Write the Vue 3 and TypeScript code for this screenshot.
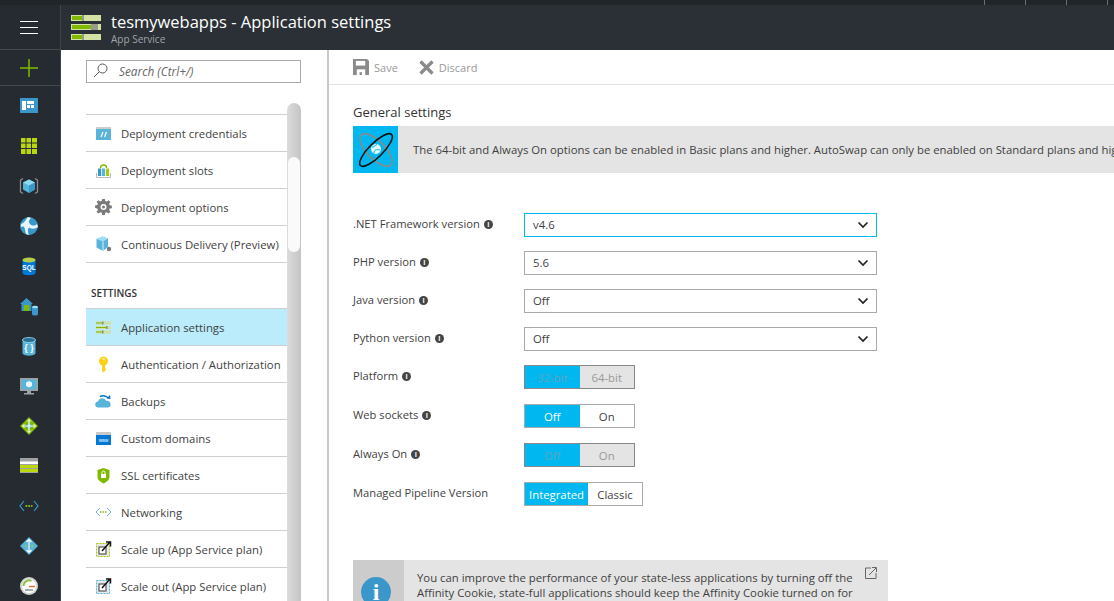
<script setup lang="ts">
const navIcons: string[] = [
  '<rect x="2" y="3" width="18" height="15" fill="#3b97c9"/><path d="M4 6h4v9H4zM9 6h7v3H9zM9 10h3v3H9zM13 10h3v3h-3z" fill="#fff"/>',
  '<rect x="3" y="3" width="16" height="16" fill="#bad80a"/><path d="M8 3v16M13.500 3v16M3 8h16M3 13.500h16" stroke="#252b30" stroke-width="1"/>',
  '<path d="M11 4.500l6 3v7l-6 3.500-6-3.500v-7z" fill="#59b4d9"/><path d="M11 4.500l6 3-6 3-6-3z" fill="#8fd8f2"/><path d="M11 10.500V18l6-3.500v-7z" fill="#3b97c9"/><path d="M5 3.500L2.500 5v12L5 18.500M17 3.500L19.500 5v12L17 18.500" fill="none" stroke="#8a8f93" stroke-width="1.300"/>',
  '<circle cx="11" cy="11" r="9" fill="#3b97c9"/><path d="M3 9c4-1 5-5 7-7l3 1c-2 2-3 4-1 6s5 2 7 0l1 3c-3 2-6 2-8 1s-3 3-1 7l-3-1c-1-3-1-6-2-7s-2 0-3 0z" fill="#e8f6fb"/>',
  '<path d="M4.500 5v13c0 3 13 3 13 0V5z" fill="#0078d7"/><ellipse cx="11" cy="5" rx="6.500" ry="2.500" fill="#b5cf4a"/><text x="11" y="15" font-size="6.500" font-weight="700" fill="#fff" text-anchor="middle" font-family="Liberation Sans">SQL</text>',
  '<path d="M2 9l6.500-6L15 9h-1.500v7h-10V9z" fill="#3b97c9"/><rect x="6" y="10" width="5" height="6" fill="#7fba00"/><path d="M14 12v7c0 2 6 2 6 0v-7z" fill="#3b97c9"/><ellipse cx="17" cy="12" rx="3" ry="1.300" fill="#a0e0f5"/>',
  '<path d="M4.500 5v13c0 3.500 13 3.500 13 0V5z" fill="#59b4d9"/><ellipse cx="11" cy="5" rx="6.500" ry="2.500" fill="#2a6f96" stroke="#a0e0f5" stroke-width=".8"/><text x="11" y="16" font-size="9" font-weight="700" fill="#fff" text-anchor="middle" font-family="Liberation Sans">{ }</text>',
  '<rect x="2" y="3" width="18" height="13" fill="#a0a1a2"/><rect x="3.500" y="4.500" width="15" height="10" fill="#59b4d9"/><path d="M11 6l3 1.500v3.500l-3 1.500-3-1.500V7.500z" fill="#e8f6fb"/><path d="M9 16h4v2h3v1.500H6V18h3z" fill="#a0a1a2"/>',
  '<path d="M11 2l9 9-9 9-9-9z" fill="#7fba00"/><circle cx="11" cy="11" r="2.500" fill="#59b4d9"/><path d="M11 4.500v13M4.500 11h13" stroke="#fff" stroke-width="1.200"/><path d="M9 6.500l2-2 2 2M9 15.500l2 2 2-2M6.500 9l-2 2 2 2M15.500 9l2 2-2 2" fill="none" stroke="#fff"/>',
  '<rect x="2" y="3" width="18" height="15" fill="#a0a1a2"/><rect x="2" y="6.500" width="18" height="2.500" fill="#fff"/><rect x="2" y="10" width="18" height="3" fill="#bad80a"/><rect x="2" y="14" width="18" height="3" fill="#bad80a"/>',
  '<path d="M6 6l-4 5 4 5M16 6l4 5-4 5" fill="none" stroke="#3b97c9" stroke-width="1.200"/><path d="M7.500 11h7" stroke="#7fba00" stroke-width="1.800" stroke-dasharray="1.800 1"/>',
  '<path d="M11 2l9 9-9 9-9-9z" fill="#59b4d9"/><path d="M11 4.500v13M8.500 7L11 4.500 13.500 7M8.500 15l2.500 2.500 2.500-2.500" fill="none" stroke="#fff" stroke-width="1.100"/><path d="M7 11h1.500M13.500 11H15" stroke="#bad80a" stroke-width="1.500"/>',
  '<circle cx="11" cy="11" r="9" fill="#d6d6d6"/><circle cx="11" cy="11" r="7" fill="#fff"/><path d="M5.500 11a5.500 5.500 0 0 1 8-5" fill="none" stroke="#8fbf3f" stroke-width="2"/><path d="M11 11.500h6" stroke="#e2703a" stroke-width="1.500"/><rect x="7" y="14" width="8" height="2" fill="#aaa"/>'
]

interface MenuItem { label: string; icon: string }

const deployItems: MenuItem[] = [
  { label: 'Deployment credentials', icon: '<path d="M1 3h15v13H1z" fill="#59b4d9"/><rect x="1" y="3" width="15" height="2" fill="#ccc"/><path d="M6 13l2-5M9.500 13l2-5" stroke="#fff" stroke-width="1.200"/>' },
  { label: 'Deployment slots', icon: '<path d="M5.500 7a3 3 0 0 1 6 0" fill="none" stroke="#7fba00" stroke-width="1.400"/><path d="M1.500 12v4.500h14V12" fill="none" stroke="#bbb"/><path d="M3 7.500h3.200V15H3z" fill="#3b97c9"/><path d="M7 7.500h3V15H7z" fill="#59b4d9"/><path d="M11 7.500h3V15h-3z" fill="#a5ce00"/>' },
  { label: 'Deployment options', icon: '<path d="M7.200 1.500h2.600l.4 2.200 1.500.6 1.900-1.300 1.800 1.800-1.300 1.900.6 1.500 2.200.4v2.600l-2.200.4-.6 1.500 1.300 1.900-1.800 1.800-1.900-1.300-1.500.6-.4 2.200H7.200l-.4-2.200-1.500-.6-1.900 1.300-1.800-1.800 1.300-1.900-.6-1.500L.1 11V8.400l2.200-.4.6-1.500L1.600 4.600l1.800-1.800 1.900 1.300 1.500-.6z" fill="#7a7a7a" transform="translate(0 -.500) scale(1 .95)"/><circle cx="8.500" cy="9" r="3" fill="#fff"/><circle cx="8.500" cy="9" r="1.500" fill="#7a7a7a"/>' },
  { label: 'Continuous Delivery (Preview)', icon: '<path d="M7.500 1.500l5.500 2V12l-5 4-6.500-3.500V4z" fill="#59b4d9"/><path d="M1.500 4l6.500 2.500L13 3.500l-5.500-2z" fill="#a0e0f5"/><path d="M8 6.500V16" stroke="#fff" stroke-width=".8"/><circle cx="14" cy="14" r="2.200" fill="#7a7a7a"/>' }
]

const settingItems: MenuItem[] = [
  { label: 'Authentication / Authorization', icon: '<circle cx="8.500" cy="6" r="4.500" fill="#fcd116"/><path d="M7 9h3v4.500h1.200v1.500H10v1l-1.500 1.500L7 16z" fill="#fcd116"/><rect x="7.300" y="3.200" width="2.400" height="1.500" fill="#fff" opacity=".8"/>' },
  { label: 'Backups', icon: '<path d="M3.500 15.500a3 3 0 0 1-.5-6 4.500 4.500 0 0 1 8.500-.5 3.300 3.300 0 0 1 1.500 6.500z" fill="#59b4d9"/><path d="M5 4.500a5 3 0 0 1 8 1.500" fill="none" stroke="#0072c6" stroke-width="1.500"/><path d="M11.500 6.500l4 .5-.5-4z" fill="#0072c6"/>' },
  { label: 'Custom domains', icon: '<rect x="1" y="3" width="15" height="13" fill="#0078d7"/><rect x="1" y="3" width="15" height="3" fill="#c8c8c8"/><text x="8.500" y="12.500" font-size="4.500" fill="#fff" text-anchor="middle" font-family="Liberation Sans">www</text>' },
  { label: 'SSL certificates', icon: '<path d="M8.500 2l6 2v7c0 3-3 5-6 6.500C5.500 16 2.500 14 2.500 11V4z" fill="#7fba00"/><rect x="6" y="8" width="5" height="4" fill="#fff"/><path d="M7 8V6.500a1.500 1.500 0 0 1 3 0V8" fill="none" stroke="#fff"/>' },
  { label: 'Networking', icon: '<path d="M5 5L1 9l4 4M12 5l4 4-4 4" fill="none" stroke="#59b4d9"/><path d="M5 9h7" stroke="#7fba00" stroke-width="1.500" stroke-dasharray="1.500 1"/>' },
  { label: 'Scale up (App Service plan)', icon: '<rect x="1.500" y="3.500" width="13" height="13" fill="#e8e8e8" stroke="#a5ce00" stroke-dasharray="2 1"/><rect x="4" y="7" width="7" height="7" fill="#fff" stroke="#555" stroke-width="1.200"/><path d="M7 11l8-9M11 2h4.500v4.500" fill="none" stroke="#111" stroke-width="1.500"/>' },
  { label: 'Scale out (App Service plan)', icon: '<rect x="1.500" y="3.500" width="13" height="13" fill="#e8e8e8" stroke="#59b4d9" stroke-dasharray="2 1"/><rect x="4" y="7" width="7" height="7" fill="#fff" stroke="#555" stroke-width="1.200"/><path d="M7 11l8-9M11 2h4.500v4.500" fill="none" stroke="#111" stroke-width="1.500"/>' }
]

const settingsIcon = '<path d="M1 3.500h15v3H1zM1 8h15v3H1zM1 12.500h15v3H1z" fill="#d0e0a0"/><path d="M1 4.500h6v1H1zM1 9h10v1H1zM1 13.500h6v1H1z" fill="#7fba00"/><path d="M7 3.500h1.500v3H7zM11 8h1.500v3H11zM7 12.500h1.500v3H7z" fill="#8a8a8a"/>'

const selects = [
  { label: '.NET Framework version', value: 'v4.6', focused: true, info: true },
  { label: 'PHP version', value: '5.6', focused: false, info: true },
  { label: 'Java version', value: 'Off', focused: false, info: true },
  { label: 'Python version', value: 'Off', focused: false, info: true }
]

const toggles = [
  { label: 'Platform', a: '32-bit', b: '64-bit', disabled: true, info: true, wide: false },
  { label: 'Web sockets', a: 'Off', b: 'On', disabled: false, info: true, wide: false },
  { label: 'Always On', a: 'Off', b: 'On', disabled: true, info: true, wide: false },
  { label: 'Managed Pipeline Version', a: 'Integrated', b: 'Classic', disabled: false, info: false, wide: true }
]
</script>

<template>
  <div class="portal">
    <div class="top-strip">
      <span class="tick" /><span class="tick" /><span class="tick" /><span class="tick" />
    </div>
    <div class="frame">
      <nav class="nav">
        <button class="nav-menu" aria-label="Menu"><span /><span /><span /></button>
        <button class="nav-new" aria-label="New">
          <svg width="18" height="18" viewBox="0 0 18 18"><path d="M9 0v18M0 9h18" stroke="#7fba00" stroke-width="1.500" /></svg>
        </button>
        <div v-for="(icon, i) in navIcons" :key="i" class="nav-item">
          <svg width="22" height="22" viewBox="0 0 22 22" v-html="icon" />
        </div>
      </nav>
      <div class="main">
        <header class="head">
          <svg class="logo" width="31" height="26" viewBox="0 0 31 26">
            <path d="M0 0h30v6H0zM0 9h30v6H0zM0 19h30v6H0z" fill="#d4e2a4" />
            <path d="M1 1h10v4H1zM1 10h19v4H1zM1 20h10v4H1z" fill="#7fba00" />
            <path d="M11 0h2v6h-2zM20 9h7v6h-7zM11 19h2v6h-2z" fill="#9a9a8a" />
          </svg>
          <div>
            <h1>tesmywebapps - Application settings</h1>
            <p>App Service</p>
          </div>
        </header>
        <div class="body">
          <aside class="menu">
            <div class="search">
              <svg width="15" height="15" viewBox="0 0 15 15"><circle cx="9.500" cy="5.500" r="4.500" fill="none" stroke="#555" /><path d="M6 9l-5 5" stroke="#555" /></svg>
              <span>Search (Ctrl+/)</span>
            </div>
            <div class="menu-scroll">
              <div class="menu-list">
                <div v-for="item in deployItems" :key="item.label" class="menu-row">
                  <svg width="17" height="18" viewBox="0 0 17 18" v-html="item.icon" />
                  <span>{{ item.label }}</span>
                </div>
                <div class="menu-title">SETTINGS</div>
                <div class="menu-row active">
                  <svg width="17" height="18" viewBox="0 0 17 18" v-html="settingsIcon" />
                  <span>Application settings</span>
                </div>
                <div v-for="item in settingItems" :key="item.label" class="menu-row">
                  <svg width="17" height="18" viewBox="0 0 17 18" v-html="item.icon" />
                  <span>{{ item.label }}</span>
                </div>
              </div>
              <div class="scrollbar"><div class="thumb" /></div>
            </div>
          </aside>
          <section class="content">
            <div class="toolbar">
              <button class="tool">
                <svg width="16" height="16" viewBox="0 0 17 17"><path d="M0 0h15l2 2v15H0z" fill="#8a8a8a" /><path d="M3 2h10v5H3z" fill="#fff" /><path d="M4 11h9v6H4z" fill="#fff" /><path d="M7 14h2.500v3H7z" fill="#8a8a8a" /></svg>
                Save
              </button>
              <button class="tool">
                <svg width="15" height="15" viewBox="0 0 15 15"><path d="M1.500 1.500l12 12M13.500 1.500l-12 12" stroke="#8a8a8a" stroke-width="3.200" /></svg>
                Discard
              </button>
            </div>
            <div class="pane">
              <h2>General settings</h2>
              <div class="banner">
                <div class="banner-icon">
                  <svg width="36" height="36" viewBox="0 0 36 36">
                    <ellipse cx="18" cy="18" rx="9" ry="21" transform="rotate(-45 18 18)" fill="none" stroke="#8a8a8a" stroke-width="1.500" />
                    <circle cx="18" cy="17" r="5" fill="#e4f6fc" />
                    <path d="M14 15c3 0 3-2 5-2.500M16 21c0-3 2-4 6-3" stroke="#00b7eb" fill="none" />
                    <ellipse cx="18" cy="18" rx="7" ry="22" transform="rotate(45 18 18)" fill="none" stroke="#111" stroke-width="1.600" />
                  </svg>
                </div>
                <p>The 64-bit and Always On options can be enabled in Basic plans and higher. AutoSwap can only be enabled on Standard plans and higher.</p>
              </div>
              <div class="form">
                <div v-for="field in selects" :key="field.label" class="field">
                  <label>{{ field.label }}<i v-if="field.info" class="info">i</i></label>
                  <div class="select" :class="{ focused: field.focused }">
                    <span>{{ field.value }}</span>
                    <svg width="12" height="8" viewBox="0 0 12 8"><path d="M1.500 1.500L6 6l4.500-4.500" fill="none" stroke="#222" stroke-width="1.700" /></svg>
                  </div>
                </div>
                <div v-for="field in toggles" :key="field.label" class="field toggle-field">
                  <label>{{ field.label }}<i v-if="field.info" class="info">i</i></label>
                  <div class="toggle" :class="{ disabled: field.disabled, wide: field.wide }">
                    <span class="on">{{ field.a }}</span>
                    <span class="off">{{ field.b }}</span>
                  </div>
                </div>
              </div>
              <div class="notice">
                <div class="notice-icon"><span>i</span></div>
                <p>You can improve the performance of your state-less applications by turning off the Affinity Cookie, state-full applications should keep the Affinity Cookie turned on for increased compatibility.</p>
                <svg class="ext" width="12" height="12" viewBox="0 0 12 12"><path d="M6 1H.5v10.500H11V6" fill="none" stroke="#666" /><path d="M4 8l7-7M7 .5h4.500V5" fill="none" stroke="#666" /></svg>
              </div>
            </div>
          </section>
        </div>
      </div>
    </div>
  </div>
</template>

<style>
html, body {
  margin: 0;
  overflow: hidden;
}
</style>

<style scoped>
.portal {
  width: 1114px;
  height: 601px;
  display: flex;
  flex-direction: column;
  overflow: hidden;
  font-family: "Open Sans", "Liberation Sans", sans-serif;
  font-size: 11.35px;
  color: #3f3f3f;
  background: #fff;
}

.top-strip {
  height: 5px;
  flex: none;
  display: flex;
  justify-content: flex-end;
  gap: 40px;
  padding-right: 6px;
  background: #20252a;
}

.tick {
  width: 1px;
  background: #6a6e72;
}

.frame {
  flex: 1;
  display: flex;
  min-height: 0;
}

.nav {
  width: 60px;
  flex: none;
  background: #252b30;
  border-right: 1px solid #3d4347;
}

.nav button {
  display: flex;
  align-items: center;
  justify-content: center;
  width: 100%;
  padding: 0 2px 0 0;
  background: none;
  border: 0;
  border-bottom: 1px solid #43494d;
}

.nav-menu {
  height: 45px;
  flex-direction: column;
  gap: 5px;
}

.nav-menu span {
  width: 18px;
  height: 1px;
  background: #fff;
}

.nav-new {
  height: 36px;
}

.nav-item {
  height: 40px;
  display: flex;
  align-items: center;
  justify-content: center;
  padding-right: 2px;
}

.main {
  flex: 1;
  min-width: 0;
  display: flex;
  flex-direction: column;
}

.head {
  height: 45px;
  flex: none;
  display: flex;
  align-items: center;
  gap: 9px;
  padding-left: 10px;
  background: #2a3035;
}

.logo {
  flex: none;
}

.head h1 {
  margin: -1px 0 0;
  font-size: 16.5px;
  font-weight: 400;
  line-height: 24px;
  color: #fff;
}

.head p {
  margin: -1px 0 0;
  font-size: 10px;
  line-height: 12px;
  color: #a0a4a8;
}

.body {
  flex: 1;
  min-height: 0;
  display: flex;
}

.menu {
  width: 266px;
  flex: none;
  box-sizing: border-box;
  padding: 10px 26px 0 25px;
  overflow: hidden;
}

.search {
  height: 23px;
  box-sizing: border-box;
  display: flex;
  align-items: center;
  gap: 11px;
  padding: 0 0 2px 6px;
  border: 1px solid #aaa;
  font-size: 11.800px;
  font-style: italic;
  color: #666;
}

.menu-scroll {
  display: flex;
  margin-top: 31px;
}

.menu-list {
  width: 201px;
  flex: none;
}

.menu-row {
  height: 36px;
  display: flex;
  align-items: center;
  gap: 9px;
  padding-left: 9px;
  border-bottom: 1px solid #cfcfcf;
  white-space: nowrap;
  overflow: hidden;
}

.menu-row svg {
  flex: none;
}

.menu-list .menu-row:first-child {
  border-top: 1px solid #cfcfcf;
  height: 36px;
}

.menu-row.active {
  background: #bbecfb;
  border-top: 1px solid #cfcfcf;
}

.menu-title {
  height: 45px;
  box-sizing: border-box;
  padding: 24px 0 0 5px;
  font-size: 10px;
  font-weight: 600;
  line-height: 13px;
  color: #333;
}

.scrollbar {
  width: 14px;
  height: 520px;
  margin-top: -11px;
  padding-top: 54px;
  box-sizing: border-box;
  border-radius: 7px 7px 0 0;
  background: linear-gradient(90deg, #dcdcdc, #c4c4c4);
}

.thumb {
  width: 12px;
  height: 95px;
  margin-left: 1px;
  border-radius: 6px;
  background: #fafafa;
}

.content {
  flex: 1;
  min-width: 0;
  border-left: 2px solid #c8c8c8;
  overflow: hidden;
}

.toolbar {
  height: 35px;
  box-sizing: border-box;
  display: flex;
  align-items: center;
  gap: 21px;
  padding-left: 24px;
  border-bottom: 1px solid #e2e2e2;
}

.tool {
  display: flex;
  align-items: center;
  gap: 5px;
  padding: 0;
  background: none;
  border: 0;
  font: inherit;
  font-size: 11px;
  color: #999;
}

.pane {
  padding: 19px 0 0 24px;
}

.pane h2 {
  margin: 0;
  font-size: 13px;
  font-weight: 400;
  line-height: 16px;
  color: #333;
}

.banner {
  display: flex;
  align-items: center;
  height: 47px;
  margin-top: 6px;
  background: #e4e4e4;
  white-space: nowrap;
}

.banner-icon {
  width: 45px;
  height: 47px;
  flex: none;
  display: flex;
  align-items: center;
  justify-content: center;
  background: #00b7f0;
}

.banner p {
  margin: 0 0 0 15px;
}

.form {
  margin-top: 40px;
}

.field {
  display: flex;
  align-items: flex-start;
  height: 38px;
}

.toggle-field {
  height: 39px;
}

.field label {
  width: 171px;
  flex: none;
  padding-top: 3px;
  font-size: 11.2px;
  line-height: 16px;
}

.info {
  display: inline-block;
  width: 9px;
  height: 9px;
  margin-left: 4px;
  border-radius: 50%;
  background: #444;
  color: #fff;
  font-size: 7px;
  font-style: normal;
  font-weight: 700;
  line-height: 9px;
  text-align: center;
  vertical-align: 1px;
}

.select {
  width: 353px;
  height: 24px;
  box-sizing: border-box;
  display: flex;
  align-items: center;
  justify-content: space-between;
  padding: 0 7px 2px 8px;
  border: 1px solid #aaa;
}

.select svg {
  margin-top: 2px;
}

.select.focused {
  border-color: #00b7f0;
}

.toggle {
  width: 111px;
  height: 24px;
  box-sizing: border-box;
  display: flex;
  border: 1px solid #aaa;
  text-align: center;
  line-height: 23px;
}

.toggle.wide {
  width: 119px;
}

.toggle span {
  flex: 1;
}

.toggle .on {
  background: #00b7f0;
  color: #fff;
}

.toggle.wide .on {
  flex: none;
  width: 63px;
}

.toggle.disabled {
  border-color: #888;
}

.toggle.disabled .on {
  color: #5ba6c4;
}

.toggle.disabled .off {
  background: #e4e4e4;
  color: #999;
}

.notice {
  position: relative;
  display: flex;
  width: 535px;
  height: 70px;
  margin-top: 39px;
  background: #e4e4e4;
}

.notice-icon {
  width: 51px;
  flex: none;
  display: flex;
  justify-content: center;
  padding: 17px 5px 0 0;
  box-sizing: border-box;
  background: #cccccc;
}

.notice-icon span {
  width: 30px;
  height: 30px;
  border-radius: 50%;
  background: #3b97c9;
  color: #fff;
  font-family: "Liberation Serif", serif;
  font-size: 24px;
  font-weight: 700;
  line-height: 30px;
  text-align: center;
}

.notice p {
  width: 445px;
  margin: 10px 0 0 13px;
  line-height: 15px;
}

.ext {
  position: absolute;
  top: 7px;
  right: 11px;
}
</style>
